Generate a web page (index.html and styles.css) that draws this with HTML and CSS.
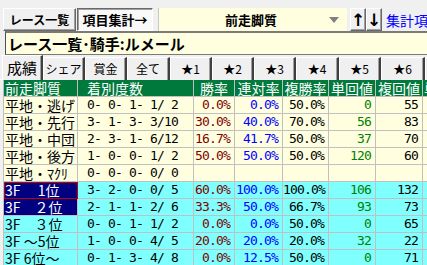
FILE: index.html
```html
<!DOCTYPE html>
<html lang="ja">
<head>
  <meta charset="UTF-8">
  <title>集計</title>
  <link rel="stylesheet" href="styles.css">
</head>
<body>

  <div id="toolbar">
    <span class="btn">レース一覧</span>
    <span class="btn btn-down">項目集計→</span>
    <div id="combo">
      <span class="combo-text">前走脚質</span>
      <span class="combo-arrow"></span>
    </div>
    <span class="btn btn-arrow">↑</span>
    <span class="btn btn-arrow">↓</span>
    <a id="link" href="#">集計項目</a>
  </div>

  <div id="title">レース一覧･騎手:ルメール</div>

  <ul id="tabs">
    <li class="tab-selected">成績</li>
    <li>シェア</li>
    <li>賞金</li>
    <li class="w43">全て</li>
    <li>★1</li>
    <li>★2</li>
    <li>★3</li>
    <li class="w43">★4</li>
    <li>★5</li>
    <li class="w44">★6</li>
    <li>★7</li>
  </ul>

  <div id="grid-wrap">
    <table id="grid">
      <colgroup>
        <col style="width:74px">
        <col style="width:116px">
        <col style="width:41px">
        <col style="width:48px">
        <col style="width:46px">
        <col style="width:47px">
        <col style="width:47px">
        <col style="width:50px">
      </colgroup>
      <tr class="head">
        <th class="left">前走脚質</th>
        <th class="left pad">着別度数</th>
        <th>勝率</th>
        <th>連対率</th>
        <th>複勝率</th>
        <th>単回値</th>
        <th>複回値</th>
        <th class="left">単勝</th>
      </tr>
      <tr class="yellow">
        <td class="name">平地・逃げ</td><td class="pre">0- 0- 1- 1/ 2</td>
        <td class="red">0.0%</td><td class="blue">0.0%</td><td>50.0%</td><td class="green">0</td><td>55</td><td></td>
      </tr>
      <tr class="yellow">
        <td class="name">平地・先行</td><td class="pre">3- 1- 3- 3/10</td>
        <td class="red">30.0%</td><td class="blue">40.0%</td><td>70.0%</td><td class="green">56</td><td>83</td><td></td>
      </tr>
      <tr class="yellow">
        <td class="name">平地・中団</td><td class="pre">2- 3- 1- 6/12</td>
        <td class="red">16.7%</td><td class="blue">41.7%</td><td>50.0%</td><td class="green">37</td><td>70</td><td></td>
      </tr>
      <tr class="yellow">
        <td class="name">平地・後方</td><td class="pre">1- 0- 0- 1/ 2</td>
        <td class="red">50.0%</td><td class="blue">50.0%</td><td>50.0%</td><td class="green">120</td><td>60</td><td></td>
      </tr>
      <tr class="yellow">
        <td class="name">平地・ﾏｸﾘ</td><td class="pre">0- 0- 0- 0/ 0</td>
        <td></td><td></td><td></td><td></td><td></td><td></td>
      </tr>
      <tr class="cyan">
        <td class="name sel focus">3F　 1位</td><td class="pre">3- 2- 0- 0/ 5</td>
        <td class="red">60.0%</td><td class="blue">100.0%</td><td>100.0%</td><td class="green">106</td><td>132</td><td></td>
      </tr>
      <tr class="cyan">
        <td class="name sel">3F　２位</td><td class="pre">2- 1- 1- 2/ 6</td>
        <td class="red">33.3%</td><td class="blue">50.0%</td><td>66.7%</td><td class="green">93</td><td>73</td><td></td>
      </tr>
      <tr class="cyan">
        <td class="name">3F　３位</td><td class="pre">0- 0- 1- 1/ 2</td>
        <td class="red">0.0%</td><td class="blue">0.0%</td><td>50.0%</td><td class="green">0</td><td>65</td><td></td>
      </tr>
      <tr class="cyan">
        <td class="name">3F ～5位</td><td class="pre">1- 0- 0- 4/ 5</td>
        <td class="red">20.0%</td><td class="blue">20.0%</td><td>20.0%</td><td class="green">32</td><td>22</td><td></td>
      </tr>
      <tr class="cyan">
        <td class="name">3F 6位～</td><td class="pre">0- 1- 3- 4/ 8</td>
        <td class="red">0.0%</td><td class="blue">12.5%</td><td>50.0%</td><td class="green">0</td><td>71</td><td></td>
      </tr>
    </table>
  </div>

</body>
</html>
```

FILE: styles.css
```css
* {
    margin: 0;
    padding: 0;
    box-sizing: border-box;
}

html, body {
    width: 427px;
    height: 265px;
    overflow: hidden;
}

body {
    background: #f0f0f0;
    font-family: "Noto Sans CJK JP", sans-serif;
    color: #000;
}

li {
    list-style: none;
}

/* ツールバー */
#toolbar {
    display: flex;
    align-items: stretch;
    height: 31px;
    padding: 8px 0 0 3px;
    white-space: nowrap;
}

#toolbar > * {
    flex: none;
}

.btn {
    display: flex;
    align-items: center;
    justify-content: center;
    height: 23px;
    width: 73px;
    font-size: 12px;
    font-weight: bold;
    background: #f0f0f0;
    border: 1px solid;
    border-color: #fff #696969 #696969 #fff;
    box-shadow: inset -1px -1px 0 #a0a0a0;
}

.btn-down {
    width: 76px;
    margin-left: 1px;
    font-size: 13px;
    background: #f9f9f9;
    border-color: #696969 #fff #fff #696969;
    box-shadow: inset 1px 1px 0 #a0a0a0;
}

#combo {
    position: relative;
    display: flex;
    align-items: center;
    justify-content: center;
    width: 189px;
    height: 23px;
    margin: 0 3px 0 5px;
    background: #ffffe0;
    border-left: 1px solid #c8c8c8;
    padding-right: 4px;
}

.combo-text {
    font-size: 13px;
    font-weight: bold;
}

.combo-arrow {
    position: absolute;
    right: 8px;
    top: 9px;
    width: 0;
    height: 0;
    border-left: 5px solid transparent;
    border-right: 5px solid transparent;
    border-top: 6px solid #808080;
}

.btn-arrow {
    width: 16px;
    font-size: 17px;
    font-family: "DejaVu Sans", sans-serif;
}

#link {
    margin: 2px 0 0 4px;
    font-size: 14px;
    color: #0000ff;
    text-decoration: none;
}

/* タイトル */
#title {
    height: 24px;
    margin-left: 5px;
    padding-left: 2px;
    background: #ffffe0;
    border-top: 2px solid #7a7a7a;
    border-left: 1px solid #505050;
    border-bottom: 1px solid #7a7a7a;
    font-size: 15px;
    font-weight: bold;
    line-height: 21px;
    white-space: nowrap;
}

/* タブ */
#tabs {
    display: flex;
    height: 25px;
    padding: 1px 0 0 2px;
    white-space: nowrap;
    border-bottom: 1px solid #fff;
}

#tabs li {
    flex: none;
    width: 42px;
    height: 23px;
    margin-top: 1px;
    font-size: 12px;
    line-height: 22px;
    text-align: center;
    background: #f0f0f0;
    border-top: 1px solid #fff;
    border-left: 1px solid #fff;
    border-right: 2px solid;
    border-right-color: #404040;
    box-shadow: inset -1px 0 0 #a0a0a0;
}

#tabs .w43 {
    width: 43px;
}

#tabs .w44 {
    width: 44px;
}

#tabs .tab-selected {
    width: 41px;
    height: 25px;
    margin-top: -1px;
    font-size: 15px;
    line-height: 23px;
    position: relative;
    z-index: 1;
}

/* 表 */
#grid-wrap {
    padding-left: 3px;
    margin-top: -1px;
    overflow: hidden;
}

#grid {
    table-layout: fixed;
    width: 469px;
    border-collapse: collapse;
    font-size: 14px;
}

#grid th, #grid td {
    height: 17px;
    padding: 0 4px 0 0;
    line-height: 16px;
    border: 1px solid #c0c0c0;
    text-align: right;
    white-space: pre;
    overflow: hidden;
    font-weight: normal;
}

#grid td {
    font-family: "DejaVu Sans Mono", monospace;
    font-size: 13px;
    letter-spacing: -0.83px;
}

#grid .head th {
    background: #007a3c;
    color: #fff;
    text-align: center;
    padding: 0;
    border-color: #c0c0c0;
}

#grid .head .left {
    text-align: left;
    padding-left: 1px;
}

#grid .head .pad {
    padding-left: 9px;
}

#grid .yellow td {
    background: #ffffe0;
}

#grid .cyan td {
    background: #80ffff;
}

#grid td.name {
    font-family: "Noto Sans CJK JP", sans-serif;
    font-size: 14px;
    letter-spacing: 0;
    text-align: left;
    padding-left: 1px;
}

#grid td.pre {
    text-align: left;
    padding-left: 9px;
}

#grid .cyan td.sel {
    background: #000080;
    color: #fff;
}

#grid td.focus {
    outline: 1px solid #c00000;
    outline-offset: -1px;
}

.red {
    color: #800000;
}

.blue {
    color: #0000ff;
}

.green {
    color: #008000;
}
```
